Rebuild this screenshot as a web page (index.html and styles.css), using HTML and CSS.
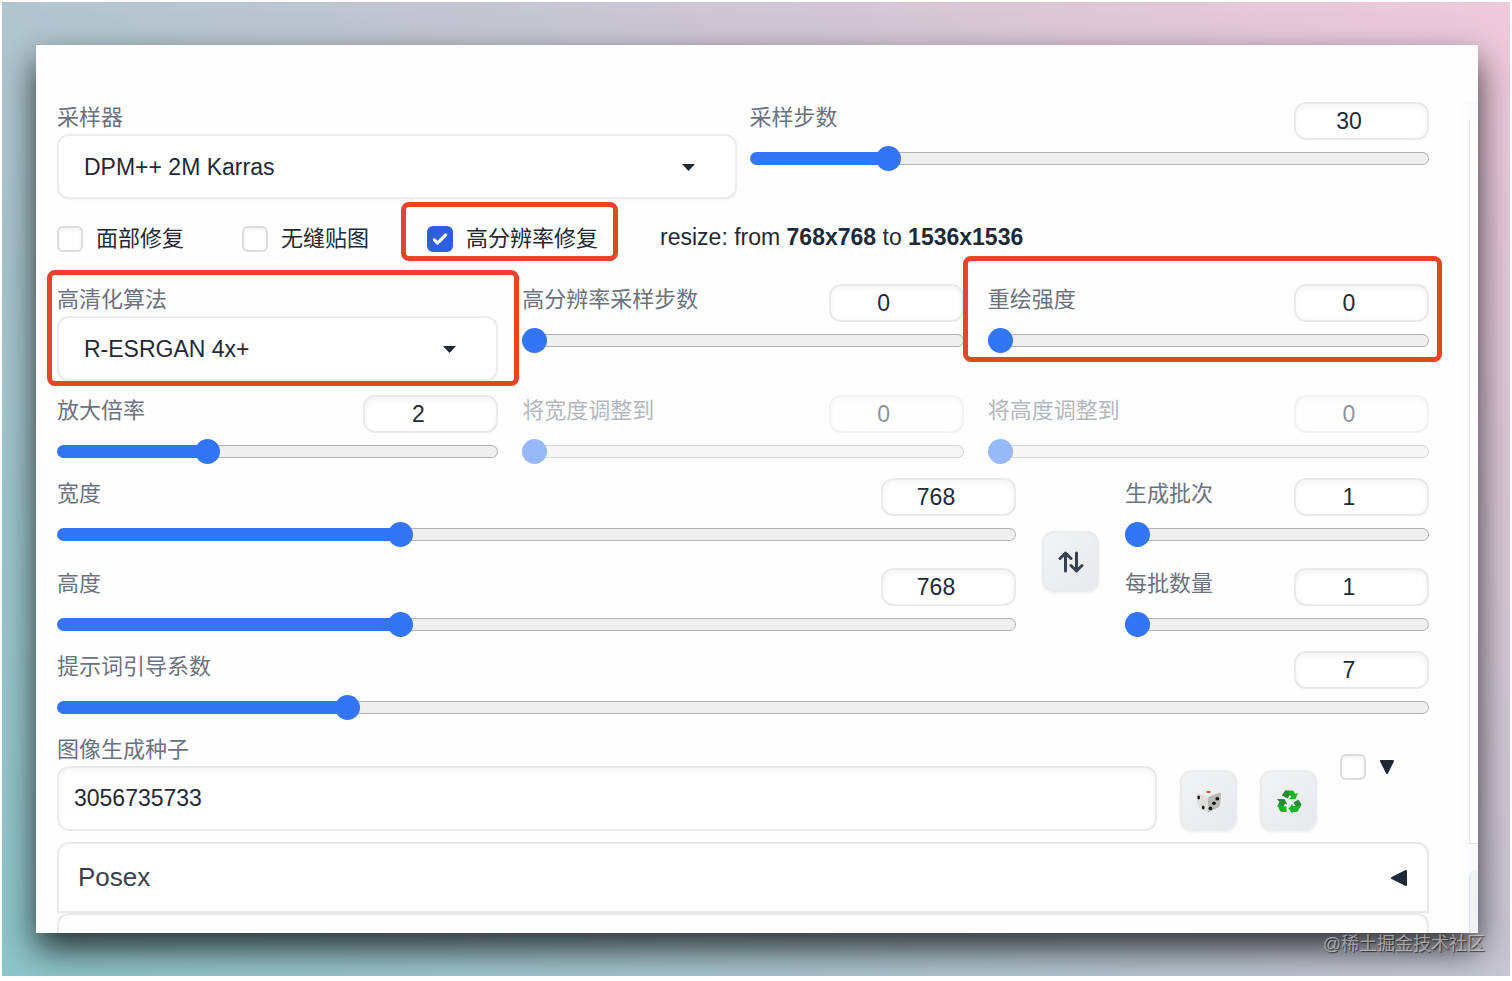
FILE: index.html
```html
<!DOCTYPE html>
<html lang="zh-CN">
<head>
  <meta charset="UTF-8">
  <meta name="viewport" content="width=device-width, initial-scale=1.0">
  <title>Stable Diffusion</title>
  <link rel="stylesheet" href="styles.css">
</head>
<body>
  <div class="frame">
    <main class="card">
      <form class="settings">
        <div class="row two-cols">
          <div class="field">
            <label for="sampler">采样器</label>
            <div class="dropdown">
              <select id="sampler"><option>DPM++ 2M Karras</option></select>
              <svg class="caret" viewBox="0 0 13 7"><path d="M0 0h13L6.500 7z"/></svg>
            </div>
          </div>
          <div class="slider">
            <div class="slider-head">
              <label for="steps">采样步数</label>
              <input type="number" value="30" aria-label="采样步数">
            </div>
            <input type="range" id="steps" min="1" max="150" value="30" style="--fill: 19.5%">
          </div>
        </div>

        <div class="checks">
          <label class="check"><input type="checkbox">面部修复</label>
          <label class="check"><input type="checkbox">无缝贴图</label>
          <label class="check marked mark-hires"><input type="checkbox" checked>高分辨率修复</label>
          <p class="resize">resize: from <b>768x768</b> to <b>1536x1536</b></p>
        </div>

        <div class="row three-cols">
          <div class="field marked mark-upscaler">
            <label for="upscaler">高清化算法</label>
            <div class="dropdown">
              <select id="upscaler"><option>R-ESRGAN 4x+</option></select>
              <svg class="caret" viewBox="0 0 13 7"><path d="M0 0h13L6.500 7z"/></svg>
            </div>
          </div>
          <div class="slider">
            <div class="slider-head">
              <label for="hires-steps">高分辨率采样步数</label>
              <input type="number" value="0" aria-label="高分辨率采样步数">
            </div>
            <input type="range" id="hires-steps" min="0" max="150" value="0">
          </div>
          <div class="slider marked mark-denoise">
            <div class="slider-head">
              <label for="denoise">重绘强度</label>
              <input type="number" value="0" aria-label="重绘强度">
            </div>
            <input type="range" id="denoise" min="0" max="1" step="0.01" value="0">
          </div>
        </div>

        <div class="row three-cols">
          <div class="slider">
            <div class="slider-head">
              <label for="scale">放大倍率</label>
              <input type="number" value="2" aria-label="放大倍率">
            </div>
            <input type="range" id="scale" min="1" max="4" step="0.05" value="2" style="--fill: 33.3%">
          </div>
          <div class="slider disabled">
            <div class="slider-head">
              <label for="resize-w">将宽度调整到</label>
              <input type="number" value="0" aria-label="将宽度调整到" disabled>
            </div>
            <input type="range" id="resize-w" min="0" max="2048" value="0" disabled>
          </div>
          <div class="slider disabled">
            <div class="slider-head">
              <label for="resize-h">将高度调整到</label>
              <input type="number" value="0" aria-label="将高度调整到" disabled>
            </div>
            <input type="range" id="resize-h" min="0" max="2048" value="0" disabled>
          </div>
        </div>

        <div class="row size-row">
          <div class="stack">
            <div class="slider">
              <div class="slider-head">
                <label for="width">宽度</label>
                <input type="number" value="768" aria-label="宽度">
              </div>
              <input type="range" id="width" min="64" max="2048" step="8" value="768" style="--fill: 35.5%">
            </div>
            <div class="slider">
              <div class="slider-head">
                <label for="height">高度</label>
                <input type="number" value="768" aria-label="高度">
              </div>
              <input type="range" id="height" min="64" max="2048" step="8" value="768" style="--fill: 35.5%">
            </div>
          </div>
          <button type="button" class="tool swap" aria-label="交换宽高">
            <svg width="26" height="24" viewBox="0 0 26 24">
              <path d="M7.500 21V3M2 8.500L7.500 3L13 8.500M18.500 3v18M13 15.500L18.500 21L24 15.500"/>
            </svg>
          </button>
          <div class="stack">
            <div class="slider">
              <div class="slider-head">
                <label for="batch-count">生成批次</label>
                <input type="number" value="1" aria-label="生成批次">
              </div>
              <input type="range" id="batch-count" min="1" max="100" value="1">
            </div>
            <div class="slider">
              <div class="slider-head">
                <label for="batch-size">每批数量</label>
                <input type="number" value="1" aria-label="每批数量">
              </div>
              <input type="range" id="batch-size" min="1" max="8" value="1">
            </div>
          </div>
        </div>

        <div class="slider">
          <div class="slider-head">
            <label for="cfg">提示词引导系数</label>
            <input type="number" value="7" aria-label="提示词引导系数">
          </div>
          <input type="range" id="cfg" min="1" max="30" step="0.5" value="7" style="--fill: 20.7%">
        </div>

        <div class="seed-row">
          <div class="field seed">
            <label for="seed">图像生成种子</label>
            <input type="text" id="seed" value="3056735733">
          </div>
          <button type="button" class="tool" aria-label="随机种子">
            <svg width="30" height="30" viewBox="0 0 30 30">
              <path fill="#f0f0ef" d="M3 7L13 3q2-.6 4 0l9 3q1 1 0 2L15 13L4 9z"/>
              <path fill="#dededd" d="M2.200 9q.2-2 2-1.600L13 10.600q1.500.6 1.500 2.400V25.500q-.5 1.500-2 .8L5.500 22q-1.500-1-1.800-2.600z"/>
              <path fill="#b9b9b8" d="M14 12.500q0-1.500 1.500-2.200L25 6.700q2.200-.5 2 1.700L26 19q-.2 1.500-1.500 2.300L15.500 26q-1.500.6-1.500-.8z"/>
              <ellipse cx="14.500" cy="6" rx="2.400" ry="1.100" fill="#cf4046"/>
              <g fill="#151515">
                <ellipse cx="4.700" cy="11.500" rx="1.300" ry="1.900"/>
                <ellipse cx="9.200" cy="21.500" rx="1.300" ry="1.900"/>
                <ellipse cx="23.300" cy="12.800" rx="1.900" ry="1.800"/>
                <ellipse cx="20" cy="17.300" rx="1.900" ry="1.800"/>
                <ellipse cx="16.500" cy="22.300" rx="1.800" ry="1.900"/>
              </g>
            </svg>
          </button>
          <button type="button" class="tool" aria-label="重复使用种子">
            <svg width="30" height="30" viewBox="0 0 30 30">
              <path fill="#258b34" d="M11 4.500H14.500L16.500 8L13.500 12.500L8 9.500z"/>
              <path fill="#10bb20" d="M13.500 4.500H19L21.500 8L24 7L21.500 13H15L17 11z"/>
              <path fill="#258b34" d="M3 13H10.500L13.500 18.500L11 17.800L9 21.500L3.200 20.500L5.500 16z"/>
              <path fill="#10bb20" d="M3.300 19L7.500 20L12.500 20.500V26H8Q6.500 26 5.500 24z"/>
              <path fill="#258b34" d="M19.500 16.500L24.500 13.500L27.500 18.500L25.500 22L22 21z"/>
              <path fill="#10bb20" d="M18.500 17.500V20H26.500L24 25Q23.500 26 22 26H18.500V28L14.500 22.500z"/>
            </svg>
          </button>
          <div class="extra">
            <input type="checkbox" aria-label="额外种子">
            <svg width="14" height="14" viewBox="0 0 14 14"><path d="M1 1H13L7 13z"/></svg>
          </div>
        </div>

        <div class="accordions">
          <button type="button" class="accordion">
            Posex
            <svg width="18" height="18" viewBox="0 0 18 18"><path d="M16 2V16L2 9z"/></svg>
          </button>
          <div class="accordion-next"></div>
        </div>
      </form>
      <aside class="gutter">
        <div class="gutter-panel"></div>
        <div class="gutter-button"></div>
      </aside>
    </main>
    <span class="watermark">@稀土掘金技术社区</span>
  </div>
</body>
</html>
```
FILE: styles.css
```css
* {
  margin: 0;
  padding: 0;
  box-sizing: border-box;
}

body {
  background: white;
  padding: 2px 2px 5px;
  font-family: "Liberation Sans", "Noto Sans CJK SC", sans-serif;
  font-size: 23px;
  color: #1f2937;
}

input, select, button {
  font: inherit;
  color: inherit;
}

.frame {
  position: relative;
  display: flex;
  flex-direction: column;
  min-height: calc(100vh - 7px);
  padding: 43px 32px 43px 34px;
  background: linear-gradient(45deg, #8cc5c8, #bcc5d1 50%, #efc9d9);
  overflow: hidden;
}

.card {
  flex: 1;
  display: flex;
  gap: 28px;
  padding: 57px 0 0 21px;
  background: #fefefe;
  box-shadow: 0 16px 32px rgba(0, 0, 0, 0.75);
}

.settings {
  flex: 1;
  min-width: 0;
  display: flex;
  flex-direction: column;
  gap: 14px;
}

.row {
  display: grid;
  align-items: start;
}

.two-cols {
  grid-template-columns: 1fr 1fr;
  gap: 13px;
}

.three-cols {
  grid-template-columns: 1fr 1fr 1fr;
  gap: 24px;
}

.size-row {
  grid-template-columns: 1fr 57px 304px;
  gap: 26px;
}

.stack {
  display: flex;
  flex-direction: column;
  gap: 21px;
}

.field label, .slider label {
  display: block;
  font-size: 22px;
  line-height: 32px;
  color: #6b7280;
}

/* Dropdowns */
.dropdown {
  position: relative;
}

select {
  appearance: none;
  display: block;
  width: 100%;
  height: 65px;
  padding: 0 60px 0 25px;
  border: 2px solid #ebecee;
  border-radius: 12px;
  background: white;
  box-shadow: 0 1px 2px rgba(0, 0, 0, 0.05);
}

.caret {
  position: absolute;
  right: 42px;
  top: 30px;
  width: 13px;
  height: 7px;
  fill: #1f2937;
}

/* Sliders */
.slider-head {
  display: flex;
  justify-content: space-between;
  align-items: flex-start;
  margin-bottom: 6px;
}

input[type="number"] {
  appearance: textfield;
  width: 135px;
  height: 38px;
  padding-right: 25px;
  border: 2px solid #e9eaec;
  border-radius: 12px;
  background: white;
  box-shadow: inset 0 2px 6px rgba(0, 0, 0, 0.05);
  text-align: center;
}

input[type="number"]::-webkit-inner-spin-button {
  appearance: none;
}

input[type="range"] {
  --fill: 0%;
  appearance: none;
  display: block;
  width: 100%;
  height: 25px;
  background: none;
}

input[type="range"]::-webkit-slider-runnable-track {
  height: 13px;
  border: 1px solid #b2b2b2;
  border-radius: 7px;
  background: #efefef;
}

/* the filled part hides the grey outline */
input[type="range"][style]::-webkit-slider-runnable-track {
  border-color: transparent;
  background:
    linear-gradient(to right, #3275f6 var(--fill), transparent var(--fill)) border-box,
    linear-gradient(#efefef, #efefef) padding-box,
    linear-gradient(#b2b2b2, #b2b2b2) border-box;
}

input[type="range"]::-webkit-slider-thumb {
  appearance: none;
  width: 25px;
  height: 25px;
  margin: -7px -1px 0;
  border-radius: 50%;
  background: #3275f6;
}

.disabled {
  opacity: 0.5;
}

/* Checkboxes */
.checks {
  display: flex;
  align-items: center;
  gap: 58px;
  padding: 13px 0 18px;
}

.check {
  display: flex;
  align-items: center;
  gap: 13px;
  height: 26px;
  font-size: 22px;
  line-height: 30px;
  white-space: nowrap;
}

input[type="checkbox"] {
  appearance: none;
  flex: none;
  width: 26px;
  height: 26px;
  border: 2px solid #dcdddf;
  border-radius: 6px;
  background: white;
  box-shadow: inset 0 2px 4px rgba(0, 0, 0, 0.05);
}

input[type="checkbox"]:checked {
  border-color: #2f5fe0;
  background: #2f5fe0 url("data:image/svg+xml,%3Csvg viewBox='0 0 16 16' fill='white' xmlns='http://www.w3.org/2000/svg'%3E%3Cpath d='M12.2 4.8a1 1 0 0 1 0 1.4l-5 5a1 1 0 0 1-1.4 0l-2-2a1 1 0 0 1 1.4-1.4L6.500 9.100l4.300-4.300a1 1 0 0 1 1.400 0z'/%3E%3C/svg%3E") center / 26px no-repeat;
}

.resize {
  padding: 0 0 4px 4px;
  line-height: 22px;
  white-space: nowrap;
}

/* Red highlight boxes */
.marked {
  position: relative;
}

.marked::after {
  content: "";
  position: absolute;
  z-index: 1;
  border: 5px solid #e94427;
  border-radius: 8px;
  pointer-events: none;
}

.mark-hires::after {
  inset: -24px -20px -9px -26px;
}

.mark-upscaler::after {
  inset: -14px -21px -5px -10px;
}

.mark-denoise::after {
  inset: -28px -13px -9px -25px;
}

/* Buttons */
.tool {
  display: flex;
  justify-content: center;
  align-items: center;
  width: 57px;
  height: 61px;
  border: 2px solid #eaebed;
  border-radius: 12px;
  background: linear-gradient(to bottom right, #f3f4f6, #e6e8eb);
  box-shadow: 0 1px 3px rgba(0, 0, 0, 0.08);
  cursor: pointer;
}

.swap {
  align-self: center;
  margin-top: 8px;
}

.swap svg {
  fill: none;
  stroke: #374151;
  stroke-width: 3;
  stroke-linecap: round;
  stroke-linejoin: round;
}

/* Seed */
.seed-row {
  display: flex;
  align-items: flex-end;
  gap: 23px;
}

.seed {
  flex: 1;
}

.seed input {
  display: block;
  width: 100%;
  height: 65px;
  padding: 0 15px;
  border: 2px solid #e9eaec;
  border-radius: 12px;
  background: white;
  box-shadow: inset 0 2px 6px rgba(0, 0, 0, 0.05);
}

.extra {
  display: flex;
  align-items: center;
  align-self: flex-start;
  gap: 14px;
  width: 89px;
  padding-top: 20px;
}

.extra svg, .accordion svg {
  fill: #1f2937;
  stroke: #1f2937;
  stroke-width: 2;
  stroke-linejoin: round;
}

/* Accordions */
.accordions {
  flex: 1;
  display: flex;
  flex-direction: column;
  margin-top: -3px;
}

.accordion {
  display: flex;
  justify-content: space-between;
  align-items: center;
  height: 71px;
  padding: 0 19px;
  border: 2px solid #e9eaec;
  border-radius: 12px 12px 0 0;
  background: white;
  font-size: 26px;
  color: #374151;
}

.accordion-next {
  flex: 1;
  min-height: 20px;
  border: 2px solid #e9eaec;
  border-bottom: none;
  border-radius: 12px 12px 0 0;
}

/* Edge of the next column */
.gutter {
  display: flex;
  flex-direction: column;
  width: 21px;
  padding: 18px 0 0 12px;
  background: linear-gradient(to right, #fefefe, #f8f9fb);
}

.gutter-panel {
  flex: 1;
  border: 1px solid #e6e7ea;
  border-width: 0 0 1px 1px;
  background: white;
}

.gutter-button {
  height: 63px;
  margin-top: 26px;
  border-left: 1px solid #e0e2e5;
  border-radius: 8px 0 0 0;
  background: #eff1f4;
}

.watermark {
  position: absolute;
  right: 25px;
  bottom: 19px;
  font-size: 18px;
  line-height: 26px;
  color: rgba(225, 225, 225, 0.6);
  text-shadow: 1px 1px 1px rgba(0, 0, 0, 0.6);
}
```
